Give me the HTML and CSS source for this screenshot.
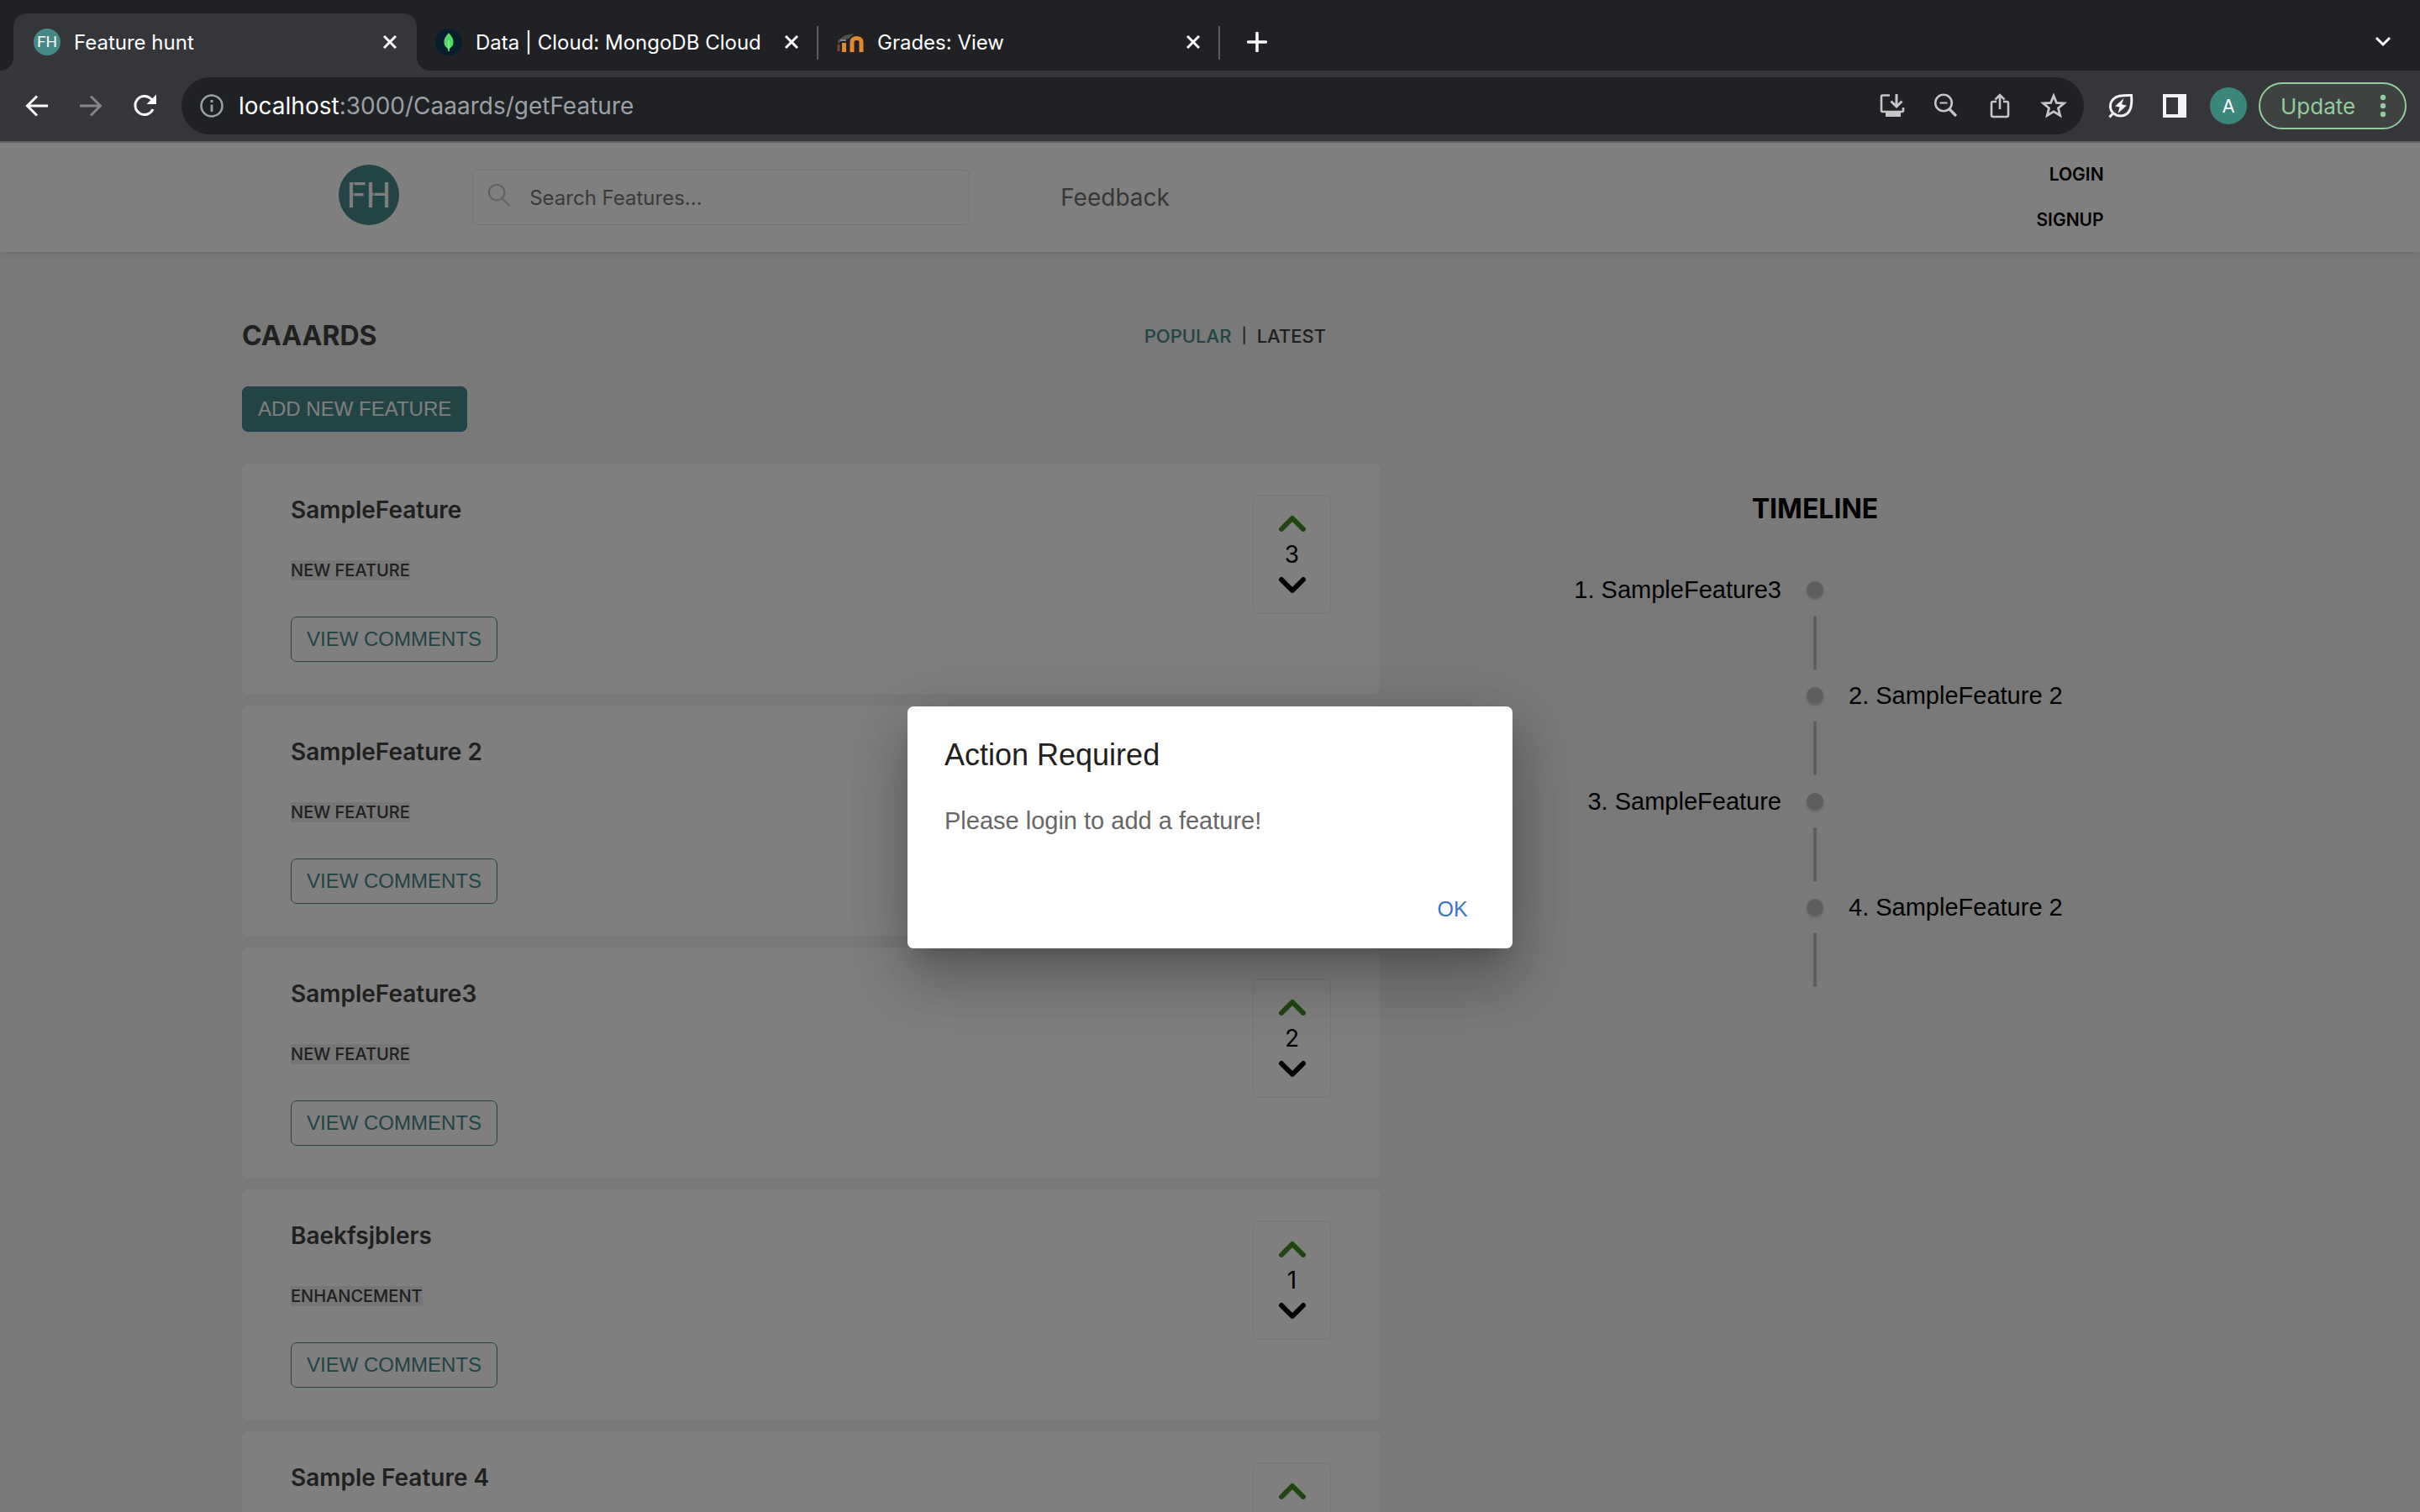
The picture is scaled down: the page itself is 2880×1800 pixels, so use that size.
FILE: index.html
```html
<!DOCTYPE html>
<html lang="en">
<head>
<meta charset="utf-8">
<title>Feature hunt</title>
<link rel="stylesheet" href="styles.css">
</head>
<body>
<div class="browser">
  <div class="tabstrip">
    <div class="tab tab-active">
      <svg class="favicon" viewBox="0 0 32 32" aria-hidden="true"><circle cx="16" cy="16" r="16" fill="#458888"/><text x="16" y="22" class="favicon-text">FH</text></svg>
      <span class="tab-title">Feature hunt</span>
      <button class="icon-btn tab-close" aria-label="Close tab"><svg width="16" height="16" viewBox="0 0 16 16"><path d="M1 1l14 14M15 1L1 15" stroke="#fff" stroke-width="3"/></svg></button>
    </div>
    <div class="tab">
      <svg class="favicon" viewBox="0 0 32 32" aria-hidden="true"><circle cx="16" cy="16" r="16" fill="#061e2b"/><path d="M16 5c-2 3-6 6-5.500 12 .3 4 3.500 6 5 7.500h1c1.500-1.500 4.800-3.500 5-7.500.5-6-3.500-9-5.500-12z" fill="#55d966"/><path d="M16 14v13" stroke="#86f58f" stroke-width="1.500"/></svg>
      <span class="tab-title">Data | Cloud: MongoDB Cloud</span>
      <button class="icon-btn tab-close" aria-label="Close tab"><svg width="16" height="16" viewBox="0 0 16 16"><path d="M1 1l14 14M15 1L1 15" stroke="#fff" stroke-width="3"/></svg></button>
    </div>
    <div class="tab tab-ruled">
      <svg class="favicon" viewBox="0 0 32 32" aria-hidden="true"><path d="M8.500 28V17M18 28V16c0-6 11-6 11 0v12" fill="none" stroke="#e0892f" stroke-width="5"/><path d="M2 19v8" stroke="#7a4630" stroke-width="3"/><path d="M1 14l9-6 10-2-6 6-8 2-4 4z" fill="#57504d"/><path d="M4 14h7" stroke="#85807e" stroke-width="2"/></svg>
      <span class="tab-title">Grades: View</span>
      <button class="icon-btn tab-close" aria-label="Close tab"><svg width="16" height="16" viewBox="0 0 16 16"><path d="M1 1l14 14M15 1L1 15" stroke="#fff" stroke-width="3"/></svg></button>
    </div>
    <button class="icon-btn new-tab" aria-label="New tab"><svg width="24" height="24" viewBox="0 0 24 24"><path d="M12 1.500v21M1.500 12h21" stroke="#fff" stroke-width="3.500" stroke-linecap="round"/></svg></button>
    <button class="icon-btn tab-search" aria-label="Search tabs"><svg width="20" height="14" viewBox="0 0 20 14"><path d="M2 2l8 8 8-8" fill="none" stroke="#fff" stroke-width="3"/></svg></button>
  </div>
  <div class="toolbar">
    <div class="nav-buttons">
      <button class="icon-btn" aria-label="Back"><svg width="32" height="32" viewBox="0 0 32 32"><path d="M29 16H5M16 4.500L4.500 16 16 27.500" fill="none" stroke="#fff" stroke-width="3"/></svg></button>
      <button class="icon-btn" aria-label="Forward"><svg width="32" height="32" viewBox="0 0 32 32"><path d="M3 16h24M16 4.500L27.500 16 16 27.500" fill="none" stroke="#85868a" stroke-width="3"/></svg></button>
      <button class="icon-btn" aria-label="Reload"><svg width="32" height="32" viewBox="0 0 32 32"><path d="M26 20a11 11 0 1 1-2.500-12.500L28 12" fill="none" stroke="#fff" stroke-width="3"/><path d="M30 2.500V14H18.500z" fill="#fff"/></svg></button>
    </div>
    <div class="omnibox">
      <svg width="28" height="28" viewBox="0 0 28 28" aria-hidden="true"><circle cx="14" cy="14" r="12.500" fill="none" stroke="#9aa0a6" stroke-width="2.500"/><path d="M14 12.500V21M14 7v3" stroke="#9aa0a6" stroke-width="2.800"/></svg>
      <span class="url"><span class="url-host">localhost</span>:3000/Caaards/getFeature</span>
      <div class="omni-actions">
        <button class="icon-btn" aria-label="Install app"><svg width="32" height="32" viewBox="0 0 32 32"><path d="M13 3.500H4.500A1.500 1.500 0 0 0 3 5v16.500A1.500 1.500 0 0 0 4.500 23h23a1.500 1.500 0 0 0 1.500-1.500V18" fill="none" stroke="#c7c5c6" stroke-width="2.600"/><path d="M8 24h18v5H8z" fill="#c7c5c6"/><path d="M21 2v14M14.500 10.500L21 17l6.500-6.500" fill="none" stroke="#c7c5c6" stroke-width="3"/></svg></button>
        <button class="icon-btn" aria-label="Zoom"><svg width="32" height="32" viewBox="0 0 32 32"><circle cx="13" cy="12.500" r="9.800" fill="none" stroke="#c7c5c6" stroke-width="2.600"/><path d="M8.500 12.500h9" stroke="#c7c5c6" stroke-width="2"/><path d="M19.500 19.500l8.500 8.500" stroke="#c7c5c6" stroke-width="3.200"/></svg></button>
        <button class="icon-btn" aria-label="Share"><svg width="32" height="32" viewBox="0 0 32 32"><path d="M12 11H8a2 2 0 0 0-2 2v14a2 2 0 0 0 2 2h16a2 2 0 0 0 2-2V13a2 2 0 0 0-2-2h-4M16 20V4M10.500 8.500L16 3l5.500 5.500" fill="none" stroke="#c7c5c6" stroke-width="2.600"/></svg></button>
        <button class="icon-btn" aria-label="Bookmark"><svg width="32" height="32" viewBox="0 0 32 32"><path d="M16 4l3.400 8.300 9 .7-6.900 5.800 2.200 8.700L16 22.800l-7.700 4.700 2.200-8.700L3.600 13l9-.7z" fill="none" stroke="#c7c5c6" stroke-width="2.800"/></svg></button>
      </div>
    </div>
    <div class="tool-actions">
      <button class="icon-btn" aria-label="Energy saver"><svg width="32" height="32" viewBox="0 0 32 32"><path d="M28.500 3.500c0 0 1 9-1 15.500-2 6-6.500 9-12 9-6 0-12-4.500-12-11.500 0-7 5-11 11-12.200 5-1 14-.8 14-.8zM7 24.500l-4.500 5" fill="none" stroke="#f1f3f4" stroke-width="3"/><path d="M19.500 7l-10.500 9.500 5.500 1L12.500 25 23 15.500l-6-1.200z" fill="#f1f3f4"/></svg></button>
      <button class="icon-btn" aria-label="Side panel"><svg width="32" height="32" viewBox="0 0 32 32"><path fill-rule="evenodd" d="M2 2h28v28H2zM6 6v20h14V6z" fill="#f1f3f4"/></svg></button>
      <button class="avatar">A</button>
      <button class="update">Update<svg width="8" height="28" viewBox="0 0 8 28" aria-hidden="true"><g fill="#92cb9d"><circle cx="4" cy="4" r="3.200"/><circle cx="4" cy="14" r="3.200"/><circle cx="4" cy="24" r="3.200"/></g></svg></button>
    </div>
  </div>
</div>

<div class="viewport">
  <header class="site-header">
    <a href="#" class="logo" aria-label="Feature hunt"><svg width="72" height="72" viewBox="0 0 72 72"><circle cx="36" cy="36" r="36" fill="#458888"/><text x="36" y="51" class="logo-text">FH</text><path d="M18 20v32M42 30v12" stroke="#458888" stroke-width="1"/></svg></a>
    <label class="search">
      <svg width="28" height="28" viewBox="0 0 30 30" aria-hidden="true"><circle cx="12" cy="12" r="10" fill="none" stroke="#c4c4c4" stroke-width="2.500"/><path d="M19 19.500l9.500 9.500" stroke="#c4c4c4" stroke-width="2.500"/></svg>
      <input type="text" placeholder="Search Features..." aria-label="Search features">
    </label>
    <a href="#" class="feedback">Feedback</a>
    <nav class="account"><a href="#">LOGIN</a><a href="#">SIGNUP</a></nav>
  </header>

  <main class="content">
    <section class="features">
      <div class="features-head">
        <h1>CAAARDS</h1>
        <div class="sort"><a href="#" class="sort-on">POPULAR</a><span class="sort-bar">|</span><a href="#">LATEST</a></div>
      </div>
      <button class="btn btn-solid">ADD NEW FEATURE</button>
      <div class="cards">
        <article class="card">
          <div class="card-body"><h2>SampleFeature</h2><span class="tag">NEW FEATURE</span><button class="btn btn-line">VIEW COMMENTS</button></div>
          <div class="vote"><button class="icon-btn" aria-label="Upvote"><svg class="up" width="36" height="24" viewBox="0 0 36 24"><path d="M5 19L18 6l13 13"/></svg></button><span>3</span><button class="icon-btn" aria-label="Downvote"><svg class="down" width="36" height="24" viewBox="0 0 36 24"><path d="M5 5l13 13L31 5"/></svg></button></div>
        </article>
        <article class="card">
          <div class="card-body"><h2>SampleFeature 2</h2><span class="tag">NEW FEATURE</span><button class="btn btn-line">VIEW COMMENTS</button></div>
          <div class="vote"><button class="icon-btn" aria-label="Upvote"><svg class="up" width="36" height="24" viewBox="0 0 36 24"><path d="M5 19L18 6l13 13"/></svg></button><span>2</span><button class="icon-btn" aria-label="Downvote"><svg class="down" width="36" height="24" viewBox="0 0 36 24"><path d="M5 5l13 13L31 5"/></svg></button></div>
        </article>
        <article class="card">
          <div class="card-body"><h2>SampleFeature3</h2><span class="tag">NEW FEATURE</span><button class="btn btn-line">VIEW COMMENTS</button></div>
          <div class="vote"><button class="icon-btn" aria-label="Upvote"><svg class="up" width="36" height="24" viewBox="0 0 36 24"><path d="M5 19L18 6l13 13"/></svg></button><span>2</span><button class="icon-btn" aria-label="Downvote"><svg class="down" width="36" height="24" viewBox="0 0 36 24"><path d="M5 5l13 13L31 5"/></svg></button></div>
        </article>
        <article class="card">
          <div class="card-body"><h2>Baekfsjblers</h2><span class="tag">ENHANCEMENT</span><button class="btn btn-line">VIEW COMMENTS</button></div>
          <div class="vote"><button class="icon-btn" aria-label="Upvote"><svg class="up" width="36" height="24" viewBox="0 0 36 24"><path d="M5 19L18 6l13 13"/></svg></button><span>1</span><button class="icon-btn" aria-label="Downvote"><svg class="down" width="36" height="24" viewBox="0 0 36 24"><path d="M5 5l13 13L31 5"/></svg></button></div>
        </article>
        <article class="card">
          <div class="card-body"><h2>Sample Feature 4</h2></div>
          <div class="vote"><button class="icon-btn" aria-label="Upvote"><svg class="up" width="36" height="24" viewBox="0 0 36 24"><path d="M5 19L18 6l13 13"/></svg></button></div>
        </article>
      </div>
    </section>
    <aside class="timeline">
      <h2>TIMELINE</h2>
      <ul>
        <li><span class="before">1. SampleFeature3</span><i class="dot"></i><i class="line"></i></li>
        <li><span class="after">2. SampleFeature 2</span><i class="dot"></i><i class="line"></i></li>
        <li><span class="before">3. SampleFeature</span><i class="dot"></i><i class="line"></i></li>
        <li><span class="after">4. SampleFeature 2</span><i class="dot"></i><i class="line"></i></li>
      </ul>
    </aside>
  </main>

  <div class="backdrop">
    <div class="dialog" role="dialog" aria-modal="true" aria-labelledby="dialog-title">
      <h2 id="dialog-title">Action Required</h2>
      <p>Please login to add a feature!</p>
      <button class="dialog-ok">OK</button>
    </div>
  </div>
</div>
</body>
</html>
```
FILE: styles.css
```css
* { box-sizing: border-box; }

body {
  margin: 0;
  height: 100vh;
  display: flex;
  flex-direction: column;
  overflow: hidden;
  font-family: Inter, "Liberation Sans", sans-serif;
  color: #404040;
}

h1, h2, p, ul { margin: 0; padding: 0; }
a { color: inherit; text-decoration: none; }
button { font-family: inherit; cursor: pointer; }
svg { display: block; flex: none; }

.icon-btn { display: block; padding: 0; border: 0; background: none; }

/* Browser frame */
.browser { flex: none; background: #35363a; border-bottom: 2px solid #5f6065; }

.tabstrip {
  display: flex;
  align-items: stretch;
  height: 84px;
  padding: 16px 34px 0 16px;
  background: #202124;
}

.tab {
  display: flex;
  align-items: center;
  gap: 16px;
  width: 478px;
  padding: 0 24px 0 22px;
  color: #fff;
  font-size: 24px;
  background: linear-gradient(#5a5b5f, #5a5b5f) right 15px / 2px 40px no-repeat;
}

.tab-active {
  position: relative;
  width: 480px;
  padding: 0 24px;
  border-radius: 16px 16px 0 0;
  background: #35363a;
}

.tab-active::before, .tab-active::after {
  content: "";
  position: absolute;
  bottom: 0;
  width: 16px;
  height: 16px;
}
.tab-active::before { right: 100%; background: radial-gradient(circle at 0 0, #202124 16px, #35363a 16px); }
.tab-active::after { left: 100%; background: radial-gradient(circle at 100% 0, #202124 16px, #35363a 16px); }

.favicon { width: 32px; height: 32px; }
.favicon-text { font: 19px Roboto, sans-serif; fill: #fff; text-anchor: middle; }
.tab-title { white-space: nowrap; }
.tab-close { margin-left: auto; }
.new-tab { margin-left: 32px; }
.tab-search { margin-left: auto; }

.toolbar { display: flex; align-items: center; height: 84px; padding: 0 16px 0 28px; }
.nav-buttons { display: flex; gap: 32px; }

.omnibox {
  flex: 1;
  display: flex;
  align-items: center;
  height: 68px;
  margin: 0 28px;
  padding: 0 20px 0 22px;
  border-radius: 34px;
  background: #202124;
}
.url { margin-left: 18px; font-size: 28px; color: #9aa0a6; }
.url-host { color: #fff; }
.omni-actions { display: flex; gap: 32px; margin-left: auto; }

.tool-actions { display: flex; align-items: center; gap: 32px; }
.avatar {
  width: 44px;
  height: 44px;
  margin: 0 -16px 0 -6px;
  padding: 0;
  border: 0;
  border-radius: 50%;
  background: #3c877b;
  color: #fff;
  font-size: 22px;
}
.update {
  display: flex;
  align-items: center;
  justify-content: space-between;
  width: 176px;
  height: 56px;
  margin-left: -2px;
  padding: 0 22px 0 24px;
  border: 2px solid #92cb9d;
  border-radius: 28px;
  background: #3e4342;
  color: #92cb9d;
  font-size: 26px;
}

/* Page */
.viewport { position: relative; flex: 1; overflow: hidden; background: #f2f2f2; }

.site-header {
  display: flex;
  align-items: center;
  height: 130px;
  padding: 0 13% 0 14%;
  background: #fff;
  box-shadow: 0 2px 6px rgba(0, 0, 0, 0.1);
}
.logo { margin-bottom: 6px; }
.logo-text { font: 42px Roboto, sans-serif; fill: #fff; text-anchor: middle; }
.search {
  display: flex;
  align-items: center;
  gap: 22px;
  width: 592px;
  height: 66px;
  margin-left: 87px;
  padding: 0 17px;
  border: 1px solid #e8e8e8;
  border-radius: 6px;
}
.search input {
  flex: 1;
  min-width: 0;
  padding: 0;
  border: 0;
  outline: 0;
  background: none;
  font: 24px Inter, sans-serif;
}
.search svg { margin-bottom: 6px; }
.search input::placeholder { color: #757575; opacity: 1; }
.feedback { margin-left: 108px; font-size: 28px; color: #6e6e6e; }
.account {
  display: flex;
  flex-direction: column;
  align-items: flex-end;
  gap: 30px;
  margin-left: auto;
  padding-right: 2px;
  font-size: 21px;
  line-height: 24px;
  font-weight: 600;
  color: #000;
}

.content {
  display: grid;
  grid-template-columns: 1354fr 864fr;
  column-gap: 86px;
  padding: 80px 10% 0;
}

.features-head { display: flex; justify-content: space-between; align-items: center; padding-right: 64px; }
h1 { font-size: 32px; line-height: 40px; font-weight: 700; }
.sort { display: flex; gap: 12px; font-size: 22px; line-height: 24px; font-weight: 500; }
.sort-on { color: #458888; }
.sort-bar { font-size: 18px; }

.btn {
  display: block;
  height: 54px;
  padding: 0 18px;
  border: 1px solid #458888;
  border-radius: 7px;
  font: 24px "Liberation Sans", Arial, sans-serif;
  white-space: nowrap;
}
.btn-solid { margin-top: 40px; border-color: #3b7cae; background: #458888; color: #fff; }
.btn-line { background: none; color: #458888; }

.cards { display: grid; gap: 14px; margin-top: 38px; }
.card {
  display: flex;
  justify-content: space-between;
  align-items: flex-start;
  min-height: 274px;
  padding: 37px 58px 36px;
  border-radius: 8px;
  background: #fff;
}
.card-body { display: flex; flex-direction: column; align-items: flex-start; }
.card h2 { font-size: 28px; line-height: 36px; font-weight: 600; }
.tag { margin: 42px 0 43px; background: #ededed; font-size: 20px; line-height: 24px; font-weight: 500; }

.vote {
  display: flex;
  flex-direction: column;
  align-items: center;
  gap: 9px;
  width: 93px;
  height: 142px;
  padding: 21px 0;
  border: 1px solid #e8e8e8;
  border-radius: 8px;
  color: #000;
  font-size: 28px;
  line-height: 32px;
}
.vote path { fill: none; stroke-width: 6; stroke-linecap: round; stroke-linejoin: round; }
.up { stroke: #3f8c24; }
.down { stroke: #000; }

.timeline { padding-top: 204px; color: #000; text-align: center; }
.timeline h2 { font-size: 32px; line-height: 44px; font-weight: 700; }
.timeline ul { margin-top: 58px; list-style: none; font: 29px/32px "Liberation Sans", Arial, sans-serif; }
.timeline li {
  display: grid;
  grid-template: 32px 94px / 1fr 20px 1fr;
  column-gap: 30px;
  justify-items: center;
  align-items: center;
}
.before { grid-area: 1 / 1; justify-self: end; }
.after { grid-area: 1 / 3; justify-self: start; }
.dot {
  grid-area: 1 / 2;
  width: 20px;
  height: 20px;
  border-radius: 50%;
  background: #bdbdbd;
  box-shadow: 0 2px 3px rgba(0, 0, 0, 0.2);
}
.line { grid-area: 2 / 2; width: 4px; height: 64px; background: #bdbdbd; }

/* Modal */
.backdrop {
  position: absolute;
  inset: 0;
  display: grid;
  place-items: center;
  background: rgba(0, 0, 0, 0.5);
}
.dialog {
  display: flex;
  flex-direction: column;
  width: 25%;
  min-width: 560px;
  padding: 29px 14px 14px;
  border-radius: 7px;
  background: #fff;
  box-shadow: 0 20px 27px -13px rgba(0, 0, 0, 0.2), 0 43px 68px 5px rgba(0, 0, 0, 0.14), 0 16px 83px 14px rgba(0, 0, 0, 0.12);
  font-family: "Liberation Sans", Arial, sans-serif;
}
.dialog h2 { padding: 0 30px; font-size: 36px; line-height: 58px; font-weight: 400; color: #212121; }
.dialog p { margin: 27px 0 50px; padding: 0 30px; font-size: 29px; line-height: 44px; color: #666; }
.dialog-ok {
  align-self: flex-end;
  width: 115px;
  height: 66px;
  padding: 0;
  border: 0;
  background: none;
  color: #3874cb;
  font-size: 25px;
}
```
